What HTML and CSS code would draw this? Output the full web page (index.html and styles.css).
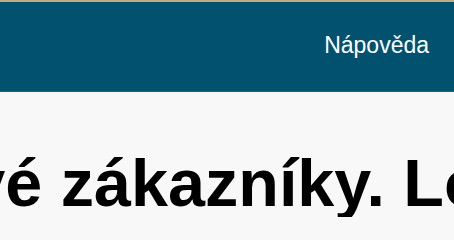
FILE: index.html
```html
<!DOCTYPE html>
<html lang="cs">
<head>
<meta charset="utf-8">
<title>Nápověda</title>
<link rel="stylesheet" href="styles.css">
</head>
<body>
<header class="topbar">
  <nav class="nav">
    <a class="nav-link" href="#">Nápověda</a>
  </nav>
</header>
<main class="hero">
  <h1 class="hero-title">Získejte nové zákazníky. Lokálně.</h1>
</main>
</body>
</html>
```

FILE: styles.css
```css
html, body {
  margin: 0;
  padding: 0;
}
body {
  background: #f8f8f8;
  font-family: "Liberation Sans", Arial, sans-serif;
  overflow: hidden;
  height: 240px;
}
.topbar {
  box-sizing: border-box;
  height: 92px;
  background: #02526f;
  border-top: 2px solid #c4a982;
  border-bottom: 1px solid #17647f;
  display: flex;
  justify-content: flex-end;
  align-items: center;
  padding: 0 25px 2px 0;
}
.nav {
  display: flex;
}
.nav-link {
  color: #ffffff;
  font-size: 23px;
  text-decoration: none;
}
.hero {
  padding-top: 58px;
  overflow: hidden;
}
.hero-title {
  margin: 0 0 0 -379px;
  font-size: 66.5px;
  font-weight: bold;
  line-height: 67px;
  color: #000000;
  white-space: nowrap;
}
```
